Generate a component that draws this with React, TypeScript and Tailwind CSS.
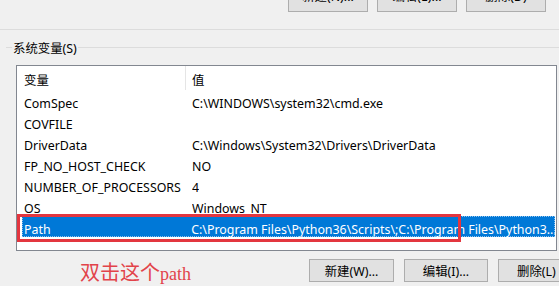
const rows = [
  { name: 'ComSpec', value: 'C:\\WINDOWS\\system32\\cmd.exe' },
  { name: 'COVFILE', value: '' },
  { name: 'DriverData', value: 'C:\\Windows\\System32\\Drivers\\DriverData' },
  { name: 'FP_NO_HOST_CHECK', value: 'NO' },
  { name: 'NUMBER_OF_PROCESSORS', value: '4' },
  { name: 'OS', value: 'Windows_NT' },
  {
    name: 'Path',
    value: 'C:\\Program Files\\Python36\\Scripts\\;C:\\Program Files\\Python3...',
    selected: true,
  },
];

const uiFont = {
  fontFamily: '"Segoe UI", "Noto Sans", "Noto Sans CJK SC", sans-serif',
};

function WinButton({ text, className }: { text: string; className: string }) {
  return (
    <div
      className={`flex shrink-0 items-center justify-center border border-[#adadad] bg-[#e1e1e1] text-black ${className}`}
    >
      {text}
    </div>
  );
}

function App() {
  return (
    <div
      className="relative h-[286px] w-[559px] overflow-hidden bg-[#f0f0f0] text-[12.4px] text-black"
      style={uiFont}
    >
      {/* top buttons, cut off by the crop */}
      <div className="flex h-[12px] items-end">
        <div className="ml-[288px] flex gap-[9px]">
          <WinButton text="新建(N)..." className="h-[30px] w-[80px]" />
          <WinButton text="编辑(E)..." className="h-[30px] w-[80px]" />
          <WinButton text="删除(D)" className="h-[30px] w-[80px]" />
        </div>
      </div>

      <div className="mt-[17px] h-px bg-[#dcdcdc]" />

      {/* group box title */}
      <div className="mt-[9px] flex h-[17px] items-center">
        <div className="ml-[6px] h-px w-[6px] bg-[#dcdcdc]" />
        <span className="px-[1px] pt-[3px] leading-none">系统变量(S)</span>
        <div className="h-px flex-1 bg-[#dcdcdc]" />
      </div>

      {/* list */}
      <div className="ml-[16px] mt-[9px] h-[186px] w-[541px] border border-[#828790] bg-white">
        <div className="flex h-[24px] items-start leading-[17px]">
          <div className="ml-[5px] w-[163px] pl-[2px] pt-[6px]">变量</div>
          <div className="h-full w-px bg-[#e5e5e5]" />
          <div className="pl-[6px] pt-[6px]">值</div>
        </div>
        {rows.map((r) => (
          <div
            key={r.name}
            className={`ml-[5px] mr-[1px] flex h-[21px] items-start whitespace-nowrap pt-[5px] leading-[17px] ${
              r.selected ? 'bg-[#0078d7] text-white outline-1 outline-dotted outline-[#8fc3ee] -outline-offset-1' : ''
            }`}
          >
            <div className="w-[170px] pl-[2px]">{r.name}</div>
            <div className="overflow-hidden">{r.value}</div>
          </div>
        ))}
      </div>

      {/* bottom row: note + buttons */}
      <div className="mt-[7px] flex items-start">
        <div
          className="ml-[80px] mt-[2px] flex items-baseline text-[#e2434a]"
          style={{ fontFamily: '"Liberation Serif", "Noto Sans CJK SC", serif' }}
        >
          <span className="text-[20px] leading-[24px]" style={{ fontFamily: '"Noto Sans CJK SC", serif' }}>
            双击这个
          </span>
          <span className="text-[18px] leading-[24px]">path</span>
        </div>
        <div className="ml-auto mt-[1px] flex gap-[10px]">
          <WinButton text="新建(W)..." className="h-[23px] w-[85px] pt-[3px]" />
          <WinButton text="编辑(I)..." className="h-[23px] w-[84px] pt-[3px]" />
          <WinButton text="删除(L)" className="-mr-[22px] h-[23px] w-[83px] justify-start pl-[18px] pt-[3px]" />
        </div>
      </div>

      {/* red highlight box over the Path row */}
      <div className="absolute left-[17px] top-[214px] h-[28px] w-[444px] border-[3px] border-[#e3363f]" />
    </div>
  );
}

export default App;
